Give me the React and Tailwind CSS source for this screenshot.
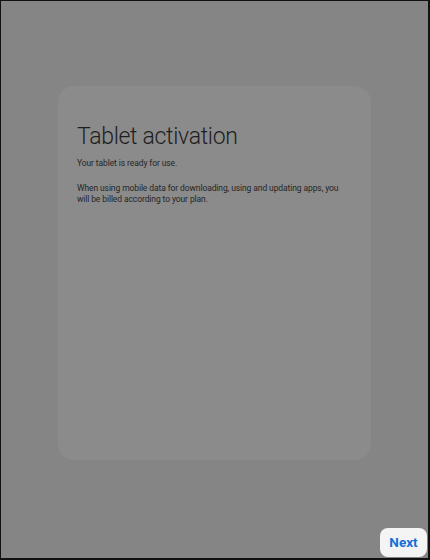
import React from 'react';

const App = () => {
    return (
        <div
            className="w-[430px] h-[560px] flex flex-col bg-[#858585] border-l border-t border-r-2 border-b-2 border-[#111111] overflow-hidden"
            style={{ fontFamily: 'Roboto, "Noto Sans", sans-serif' }}
        >
            <div className="px-[57px] pt-[85px] flex">
                <div className="flex-1 h-[374px] bg-[#8b8b8b] rounded-[16px] pl-[19px] pr-[20px] pt-[37px]">
                    <h1 className="text-[23px] leading-[28px] font-light text-[#1e1e1e] tracking-[-0.3px]">Tablet activation</h1>
                    <p className="mt-[7px] text-[8.5px] leading-[11px] text-[#262626] tracking-[-0.1px]">Your tablet is ready for use.</p>
                    <p className="mt-[14px] text-[8.5px] leading-[10.6px] text-[#262626] tracking-[-0.1px]">
                        When using mobile data for downloading, using and updating apps, you will be billed according to your plan.
                    </p>
                </div>
            </div>
            <div className="flex-1 flex items-end justify-end pr-[1px] pb-[1px]">
                <button className="w-[47px] h-[29px] rounded-[8px] bg-[#f4f4f4] text-[#1470d4] text-[13.5px] font-bold">Next</button>
            </div>
        </div>
    );
};

export default App;
